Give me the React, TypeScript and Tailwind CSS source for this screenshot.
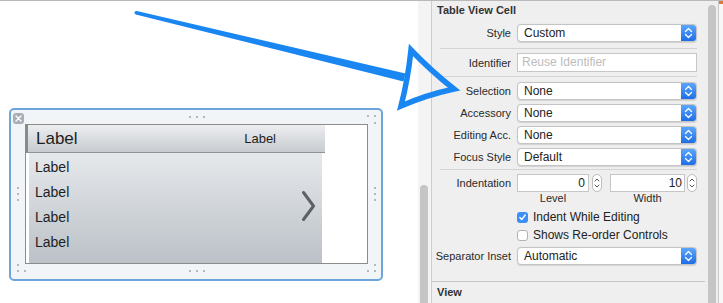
import React from "react";

const StepperArrows: React.FC<{ color?: string }> = ({ color = "#ffffff" }) => (
  <svg width="15" height="16" viewBox="0 0 15 16" fill="none">
    <path d="M4.5 6.5 L7.5 3.5 L10.5 6.5" stroke={color} strokeWidth="1.3" strokeLinecap="round" strokeLinejoin="round" />
    <path d="M4.5 9.5 L7.5 12.5 L10.5 9.5" stroke={color} strokeWidth="1.3" strokeLinecap="round" strokeLinejoin="round" />
  </svg>
);

const Popup: React.FC<{ value: string }> = ({ value }) => (
  <div className="ml-[5px] flex h-[18px] w-[180px] shrink-0 items-center overflow-hidden rounded-[4px] border border-[#c4c4c4] bg-white shadow-[0_0.5px_1px_rgba(0,0,0,0.12)]">
    <span className="flex-1 pl-[6px] text-[12px] leading-[16px] text-[#222]">{value}</span>
    <div className="flex h-full w-[15px] items-center justify-center bg-gradient-to-b from-[#5ba6fb] to-[#1b6ee6]">
      <StepperArrows />
    </div>
  </div>
);

const Label: React.FC<{ children: React.ReactNode }> = ({ children }) => (
  <span className="w-[80px] shrink-0 pr-[1px] text-right text-[11px] leading-[14px] text-[#2a2a2a]">{children}</span>
);

const Separator = ({ className }: { className: string }) => (
  <div className={"ml-[8px] h-px w-[257px] bg-[#d3d3d3] " + className} />
);

const SmallStepper = () => (
  <div className="flex h-[18px] w-[10px] shrink-0 items-center justify-center rounded-full border border-[#bdbdbd] bg-white">
    <svg width="8" height="14" viewBox="0 0 8 14" fill="none">
      <path d="M2 5 L4 3 L6 5" stroke="#555" strokeWidth="1" strokeLinecap="round" strokeLinejoin="round" />
      <path d="M2 9 L4 11 L6 9" stroke="#555" strokeWidth="1" strokeLinecap="round" strokeLinejoin="round" />
    </svg>
  </div>
);

const Checkbox: React.FC<{ checked?: boolean; label: string; className?: string }> = ({ checked, label, className = "" }) => (
  <div className={"ml-[85px] flex h-[18px] items-center gap-[5px] " + className}>
    {checked ? (
      <div className="flex h-[11px] w-[11px] items-center justify-center rounded-[3px] bg-[#3b8ff6]">
        <svg width="9" height="9" viewBox="0 0 9 9" fill="none">
          <path d="M1.8 4.6 L3.7 6.6 L7.2 2" stroke="#fff" strokeWidth="1.4" strokeLinecap="round" strokeLinejoin="round" />
        </svg>
      </div>
    ) : (
      <div className="h-[11px] w-[11px] rounded-[3px] border border-[#b3b3b3] bg-white" />
    )}
    <span className="text-[12px] leading-[14px] text-[#222]">{label}</span>
  </div>
);

const handleDots: [number, number][] = [
  [179, 7], [186, 7], [193, 7],
  [357, 6], [364, 6], [364, 13],
  [7, 78], [7, 84], [7, 90],
  [364, 78], [364, 84], [364, 90],
  [7, 155], [7, 161], [14, 161],
  [179, 161], [186, 161], [193, 161],
  [364, 155], [357, 161], [364, 161],
];

const CellFrame = () => (
  <div className="relative h-[173px] w-[374px] rounded-[5px] border-2 border-[#6ea5dd] bg-[#f2f5f8] pl-[14px] pt-[14px]">
    {/* close badge */}
    <div className="absolute left-[2px] top-[3px] flex h-[11px] w-[11px] items-center justify-center rounded-[3px] bg-[#a8aeb5]">
      <svg width="7" height="7" viewBox="0 0 7 7">
        <path d="M1 1 L6 6 M6 1 L1 6" stroke="#fff" strokeWidth="1.4" strokeLinecap="round" />
      </svg>
    </div>
    {/* resize handles */}
    <svg className="pointer-events-none absolute left-0 top-0 h-[169px] w-[370px]" viewBox="0 0 370 169">
      {handleDots.map(([x, y], i) => (
        <circle key={i} cx={x} cy={y} r="0.9" fill="#9a9a9a" />
      ))}
    </svg>

    <div className="flex h-[140px] w-[343px] flex-col border border-[#8c8c8c] bg-white">
      {/* header row */}
      <div className="flex h-[28px] w-[299px] shrink-0 items-center border-b border-l-2 border-b-[#8f9297] border-l-[#8a8a8a] bg-gradient-to-b from-[#eceef0] to-[#c8cbcf] pl-[8px] pr-[49px]">
        <span className="flex-1 text-[17px] leading-[20px] text-[#1e1e1e]">Label</span>
        <span className="text-[13px] leading-[16px] text-[#1e1e1e]">Label</span>
      </div>
      {/* content */}
      <div className="ml-[3px] flex w-[293px] flex-1 items-center bg-gradient-to-b from-[#e6e9ec] to-[#bbc1c7]">
        <div className="flex flex-1 flex-col self-start pl-[6px] pt-[2px]">
          {["Label", "Label", "Label", "Label"].map((l, i) => (
            <div key={i} className="flex h-[25px] items-center text-[14px] text-[#1e1e1e]">
              {l}
            </div>
          ))}
        </div>
        <svg className="mr-[6px] mt-[-4px]" width="15" height="32" viewBox="0 0 15 32" fill="none">
          <path d="M2.5 2.5 L12.5 16 L2.5 29.5" stroke="#5d6166" strokeWidth="3" strokeLinecap="round" strokeLinejoin="round" />
        </svg>
      </div>
    </div>
  </div>
);

const Inspector = () => (
  <div className="flex w-[274px] shrink-0 flex-col border-l border-[#cdcdcd] bg-[#efefef] pt-[2px]">
    <div className="h-[14px] pl-[5px] text-[11px] font-bold leading-[14px] text-[#333]">Table View Cell</div>

    <div className="mt-[7px] flex h-[18px] items-center">
      <Label>Style</Label>
      <Popup value="Custom" />
    </div>
    <Separator className="mt-[6px]" />
    <div className="mt-[4px] flex h-[19px] items-center">
      <Label>Identifier</Label>
      <div className="ml-[5px] h-[19px] w-[180px] border border-[#c6c6c6] bg-white pl-[4px] text-[12px] leading-[17px] text-[#bcbcbc]">
        Reuse Identifier
      </div>
    </div>
    <Separator className="mt-[4px]" />
    <div className="mt-[5px] flex h-[18px] items-center">
      <Label>Selection</Label>
      <Popup value="None" />
    </div>
    <div className="mt-[4px] flex h-[18px] items-center">
      <Label>Accessory</Label>
      <Popup value="None" />
    </div>
    <div className="mt-[4px] flex h-[18px] items-center">
      <Label>Editing Acc.</Label>
      <Popup value="None" />
    </div>
    <div className="mt-[4px] flex h-[18px] items-center">
      <Label>Focus Style</Label>
      <Popup value="Default" />
    </div>
    <Separator className="mt-[3px]" />

    <div className="mt-[4px] flex h-[18px] items-center">
      <Label>Indentation</Label>
      <div className="ml-[5px] h-[18px] w-[72px] shrink-0 border border-[#c6c6c6] bg-white pr-[3px] text-right text-[12px] leading-[16px] text-[#222]">
        0
      </div>
      <div className="ml-[3px]">
        <SmallStepper />
      </div>
      <div className="ml-[8px] h-[18px] w-[75px] shrink-0 border border-[#c6c6c6] bg-white pr-[2px] text-right text-[12px] leading-[16px] text-[#222]">
        10
      </div>
      <div className="ml-[2px]">
        <SmallStepper />
      </div>
    </div>
    <div className="ml-[85px] flex h-[12px] items-center text-[11px] leading-[12px] text-[#2a2a2a]">
      <span className="w-[72px] text-center">Level</span>
      <span className="ml-[21px] w-[75px] text-center">Width</span>
    </div>

    <Checkbox checked label="Indent While Editing" className="mt-[4px]" />
    <Checkbox label="Shows Re-order Controls" />

    <div className="mt-[3px] flex h-[18px] items-center">
      <Label>Separator Inset</Label>
      <Popup value="Automatic" />
    </div>

    <div className="mt-[16px] h-px w-full bg-[#c6c6c6]" />
    <div className="h-[20px] pl-[5px] text-[11px] font-bold leading-[20px] text-[#333]">View</div>
  </div>
);

export default function App() {
  return (
    <div className="relative flex h-[303px] w-[723px] overflow-hidden border-t border-[#b9b9b9] bg-white font-['Liberation_Sans',Arial,sans-serif]">
      {/* canvas */}
      <div className="w-[418px] shrink-0 bg-white pl-[9px] pt-[107px]">
        <CellFrame />
      </div>

      {/* canvas scroller */}
      <div className="flex w-[13px] shrink-0 flex-col justify-end bg-[#f4f4f4] pl-[2px]">
        <div className="h-[118px] w-[8px] rounded-t-full bg-[#c5c5c5]" />
      </div>

      <Inspector />

      {/* inspector scroller */}
      <div className="flex w-[13px] shrink-0 flex-col bg-[#efefef] pl-[3px] pt-[4px]">
        <div className="w-[8px] flex-1 rounded-t-full bg-[#c5c5c5]" />
      </div>
      <div className="flex w-[5px] shrink-0 flex-col border-l border-[#c9c9c9] bg-[#f7f7f7]">
        <div className="h-[3px] bg-[#dd7a3a]" />
      </div>

      {/* hand-drawn arrow annotation */}
      <svg className="pointer-events-none absolute left-0 top-[-1px] h-[303px] w-[723px]" viewBox="0 0 723 303" fill="none">
        <path d="M136.8 11 L405.5 73.5 L403.5 81.5 L135.8 14.4 Z" fill="#1a86f2" />
        <circle cx="136.2" cy="12.7" r="1.7" fill="#1a86f2" />
        <path
          d="M411 50 Q431 71 454 89 Q426 95 401 106 Q408 79 411 50 Z"
          stroke="#1a86f2"
          strokeWidth="5.5"
          strokeLinejoin="miter"
          strokeMiterlimit="6"
        />
      </svg>
    </div>
  );
}
